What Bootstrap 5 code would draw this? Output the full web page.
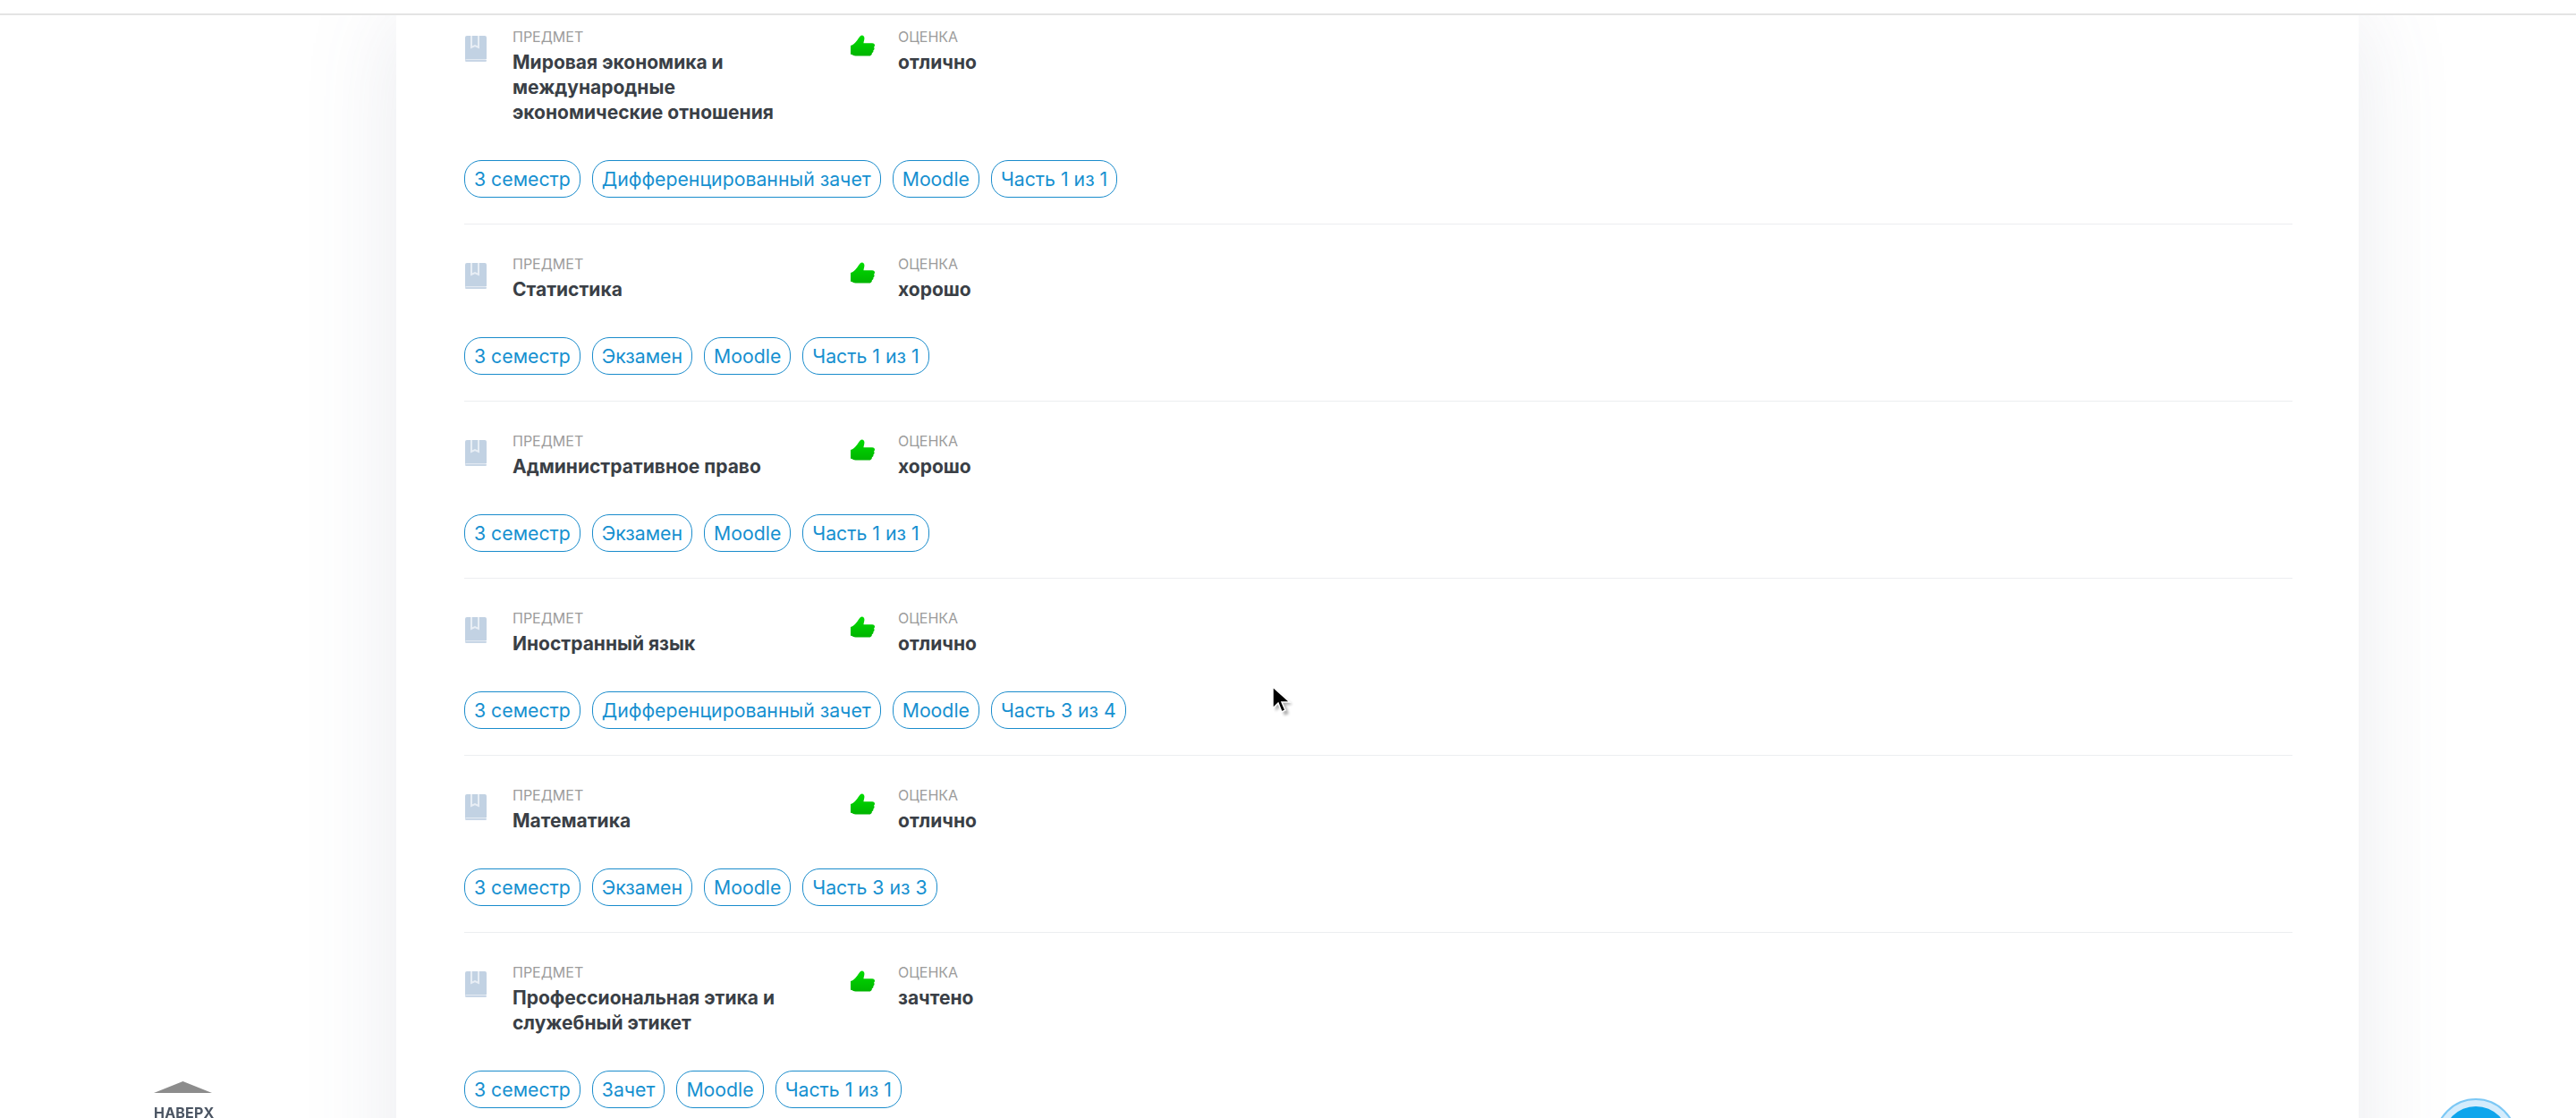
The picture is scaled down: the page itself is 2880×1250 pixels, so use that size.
<!DOCTYPE html>
<html lang="ru">
<head>
<meta charset="utf-8">
<title>Оценки</title>
<link href="https://cdn.jsdelivr.net/npm/bootstrap@5.3.0/dist/css/bootstrap.min.css" rel="stylesheet">
<style>
html,body{height:1250px;overflow:hidden;background:#fff;font-family:Inter,"Liberation Sans",sans-serif}
.top-strip{height:17px;background:#fff;border-bottom:2px solid #e4e4e4;position:fixed;top:0;left:0;right:0;z-index:5}
.sheet{width:2194px;margin:17px 0 0 443px;height:1400px;padding:0 74px 0 76px;background:#fff;box-shadow:0 0 100px rgba(90,100,130,.13)}
.rec{padding:34px 0 29px;border-bottom:1px solid #eceef0}
.rec:first-child{padding-top:14px}
.rec-main{margin-bottom:39px}
.subj{width:429px;padding-right:56px}
.ic-book{width:24px;height:29px;margin:9px 0 0 1px;flex:none}
.ic-thumb{width:27px;height:25px;margin:8px 0 0 3px;flex:none}
.subj-text{margin-left:29px}
.grade-text{margin-left:26px}
.lbl{font-size:16px;line-height:20px;color:#9c9c9c;text-transform:uppercase;margin-bottom:5px}
.val{font-size:21px;line-height:28px;font-weight:700;color:#3a3f46}
.tag-row{gap:13px}
.tagp{height:42px;line-height:40px;padding:0 10px;border:1px solid #1a8ccc;border-radius:19px;font-size:21.25px;color:#1690d0;white-space:nowrap}
.up-btn{position:fixed;left:172px;top:1209px;width:66px;text-align:center;z-index:6}
.up-btn svg{display:block;width:65px;height:13px}
.up-txt{font-size:16px;line-height:16px;font-weight:700;color:#4b5563;margin-top:14px;letter-spacing:.2px}
.chat-btn{position:fixed;left:2722px;top:1228px;width:92px;height:92px;border-radius:50%;background:#d4ecfc;border:2px solid #7cc8f5;padding:7px;z-index:6}
.chat-core{width:100%;height:100%;border-radius:50%;background:#0ea5ec}
.ptr{position:fixed;left:1419px;top:764px;width:30px;height:38px;z-index:7}
</style>
</head>
<body>
<svg width="0" height="0" class="position-absolute">
<defs>
<linearGradient id="gg" x1="0" y1="0" x2="0" y2="1"><stop offset="0" stop-color="#00dc00"/><stop offset="1" stop-color="#00b400"/></linearGradient>
<symbol id="bk" viewBox="0 0 24 29"><path fill="#c2d2e3" d="M2 0h20a2 2 0 0 1 2 2v24H3a3 3 0 0 0-3 1V2a2 2 0 0 1 2-2Z"/><path fill="none" stroke="#e8eef5" stroke-width="2" d="M7 0v13l4-2 4 2V0"/><rect x="0" y="26.500" width="24" height="2.500" rx="1.200" fill="#c8d6e6"/></symbol>
<symbol id="th" viewBox="0 0 28 25"><path fill="url(#gg)" d="M13 0c2 0 3 1.500 3 3.500 0 2-.8 3.500-1 5.500h10c2 0 3 1 3 2.500 0 1-.5 1.700-1 2.200.4.500.6 1.100.5 1.800-.1 1-.7 1.500-1.200 1.900.2.600.2 1.200-.1 1.800-.3.700-.9 1.100-1.500 1.300.2.600.1 1.200-.3 1.800-.5.900-1.400 1.600-3 1.600H8c-3 0-5-.6-6.500-1.600L0 22V12c3-1 5-3 7-5.500C9.500 3.500 11 0 13 0Z"/></symbol>
</defs>
</svg>
<div class="top-strip"></div>
<main class="sheet">
<section class="rec"><div class="rec-main d-flex"><div class="subj d-flex"><svg class="ic-book"><use href="#bk"/></svg><div class="subj-text"><div class="lbl">Предмет</div><div class="val">Мировая экономика и международные экономические отношения</div></div></div><div class="d-flex"><svg class="ic-thumb"><use href="#th"/></svg><div class="grade-text"><div class="lbl">Оценка</div><div class="val">отлично</div></div></div></div><div class="tag-row d-flex"><span class="tagp">3 семестр</span><span class="tagp">Дифференцированный зачет</span><span class="tagp">Moodle</span><span class="tagp">Часть 1 из 1</span></div></section>
<section class="rec"><div class="rec-main d-flex"><div class="subj d-flex"><svg class="ic-book"><use href="#bk"/></svg><div class="subj-text"><div class="lbl">Предмет</div><div class="val">Статистика</div></div></div><div class="d-flex"><svg class="ic-thumb"><use href="#th"/></svg><div class="grade-text"><div class="lbl">Оценка</div><div class="val">хорошо</div></div></div></div><div class="tag-row d-flex"><span class="tagp">3 семестр</span><span class="tagp">Экзамен</span><span class="tagp">Moodle</span><span class="tagp">Часть 1 из 1</span></div></section>
<section class="rec"><div class="rec-main d-flex"><div class="subj d-flex"><svg class="ic-book"><use href="#bk"/></svg><div class="subj-text"><div class="lbl">Предмет</div><div class="val">Административное право</div></div></div><div class="d-flex"><svg class="ic-thumb"><use href="#th"/></svg><div class="grade-text"><div class="lbl">Оценка</div><div class="val">хорошо</div></div></div></div><div class="tag-row d-flex"><span class="tagp">3 семестр</span><span class="tagp">Экзамен</span><span class="tagp">Moodle</span><span class="tagp">Часть 1 из 1</span></div></section>
<section class="rec"><div class="rec-main d-flex"><div class="subj d-flex"><svg class="ic-book"><use href="#bk"/></svg><div class="subj-text"><div class="lbl">Предмет</div><div class="val">Иностранный язык</div></div></div><div class="d-flex"><svg class="ic-thumb"><use href="#th"/></svg><div class="grade-text"><div class="lbl">Оценка</div><div class="val">отлично</div></div></div></div><div class="tag-row d-flex"><span class="tagp">3 семестр</span><span class="tagp">Дифференцированный зачет</span><span class="tagp">Moodle</span><span class="tagp">Часть 3 из 4</span></div></section>
<section class="rec"><div class="rec-main d-flex"><div class="subj d-flex"><svg class="ic-book"><use href="#bk"/></svg><div class="subj-text"><div class="lbl">Предмет</div><div class="val">Математика</div></div></div><div class="d-flex"><svg class="ic-thumb"><use href="#th"/></svg><div class="grade-text"><div class="lbl">Оценка</div><div class="val">отлично</div></div></div></div><div class="tag-row d-flex"><span class="tagp">3 семестр</span><span class="tagp">Экзамен</span><span class="tagp">Moodle</span><span class="tagp">Часть 3 из 3</span></div></section>
<section class="rec"><div class="rec-main d-flex"><div class="subj d-flex"><svg class="ic-book"><use href="#bk"/></svg><div class="subj-text"><div class="lbl">Предмет</div><div class="val">Профессиональная этика и служебный этикет</div></div></div><div class="d-flex"><svg class="ic-thumb"><use href="#th"/></svg><div class="grade-text"><div class="lbl">Оценка</div><div class="val">зачтено</div></div></div></div><div class="tag-row d-flex"><span class="tagp">3 семестр</span><span class="tagp">Зачет</span><span class="tagp">Moodle</span><span class="tagp">Часть 1 из 1</span></div></section>
</main>
<div class="up-btn"><svg viewBox="0 0 65 13"><path fill="#8c8c8c" d="M32.500 0 65 13H0Z"/></svg><div class="up-txt">НАВЕРХ</div></div>
<div class="chat-btn"><div class="chat-core"></div></div>
<svg class="ptr" viewBox="0 0 30 38"><defs><filter id="sh" x="-30%" y="-30%" width="160%" height="160%"><feGaussianBlur stdDeviation="1.500"/></filter></defs><path d="M6 6v23l6-5 4 10 5-2-4-10h8Z" fill="#000" opacity=".3" filter="url(#sh)" transform="translate(1 2)"/><path d="M4 4v24l6-6 4 10 4-2-4-9h9Z" fill="#000" stroke="#fff" stroke-width="1.500"/></svg>
<script src="https://cdn.jsdelivr.net/npm/bootstrap@5.3.0/dist/js/bootstrap.bundle.min.js"></script>
</body>
</html>
